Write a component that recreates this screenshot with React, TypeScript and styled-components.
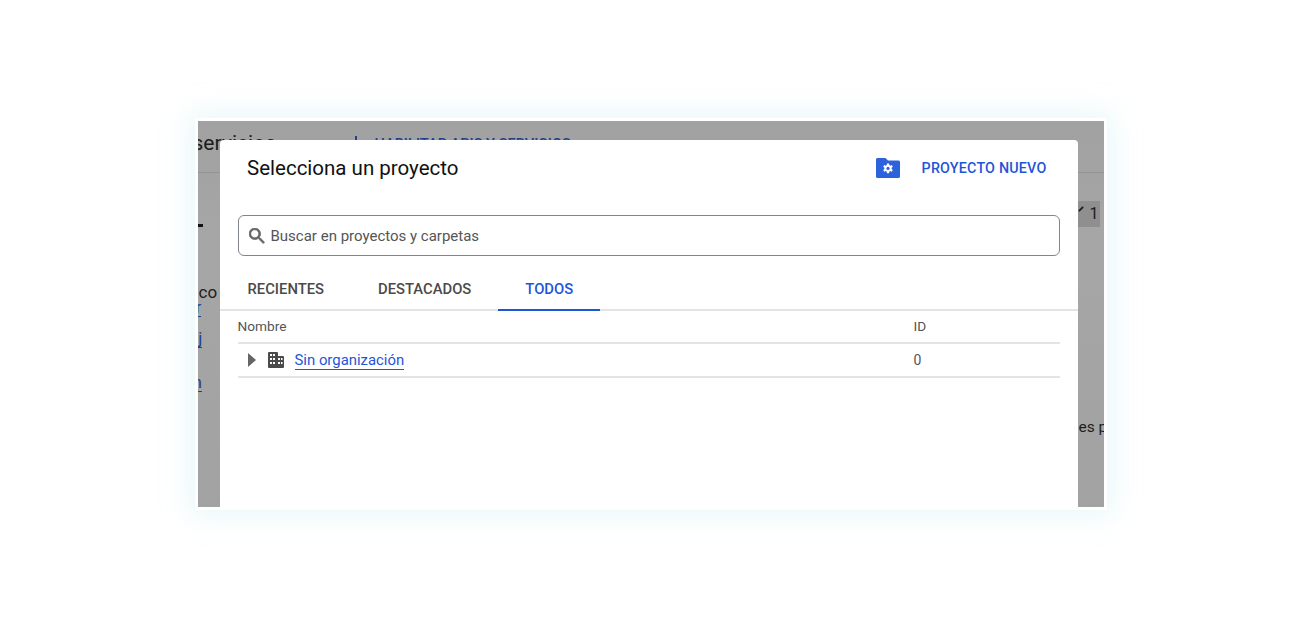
import React from 'react';
import styled, { createGlobalStyle } from 'styled-components';

const GlobalStyle = createGlobalStyle`
	html, body {
		margin: 0;
		padding: 0;
		background: #fff;
		font-family: Roboto, 'Liberation Sans', sans-serif;
	}
`;

const FolderGearIcon = () => (
	<svg width="24" height="20" viewBox="0 0 24 20">
		<path
			fill="#2c63dc"
			d="M1.500 0h8l2.500 2.600h10.500c.8 0 1.500.7 1.500 1.500v14.400c0 .8-.7 1.500-1.500 1.500h-21C.7 20 0 19.300 0 18.500v-17C0 .7.7 0 1.500 0z"
		/>
		<path
			fill="#fff"
			d="M13 5.600h-2l-.3 1.500-1 .6-1.500-.6-1 1.700 1.200 1v1.200l-1.200 1 1 1.700 1.500-.6 1 .6.3 1.500h2l.3-1.500 1-.6 1.500.6 1-1.700-1.200-1V9.800l1.200-1-1-1.700-1.500.6-1-.6z"
		/>
		<circle cx="12" cy="10.400" r="1.600" fill="#2c63dc" />
	</svg>
);

const SearchIcon = () => (
	<svg width="16" height="16" viewBox="3 3 18 18">
		<path
			fill="#666"
			stroke="#666"
			strokeWidth="0.8"
			d="M15.500 14h-.79l-.28-.27A6.470 6.470 0 0 0 16 9.500 6.500 6.500 0 1 0 9.500 16c1.610 0 3.090-.59 4.230-1.570l.27.28v.79l5 4.990L20.490 19l-4.990-5zm-6 0C7.010 14 5 11.990 5 9.500S7.010 5 9.500 5 14 7.010 14 9.500 11.990 14 9.500 14z"
		/>
	</svg>
);

const BuildingIcon = () => (
	<svg width="16" height="16" viewBox="0 0 16 16">
		<path
			fill="#4a4a4a"
			fillRule="evenodd"
			d="M1 0h8a1 1 0 0 1 1 1v3h5a1 1 0 0 1 1 1v10a1 1 0 0 1-1 1H1a1 1 0 0 1-1-1V1a1 1 0 0 1 1-1zM2 2v2h2V2zm3 0v2h2V2zM2 6v2h2V6zm3 0v2h2V6zm5 0v2h2V6zm3 0v2h1.500V6zM2 10v2h2v-2zm3 0v2h2v-2zm5 0v2h2v-2zm3 0v2h1.500v-2z"
		/>
	</svg>
);

const tabs = ['RECIENTES', 'DESTACADOS', 'TODOS'];

const App = () => {
	return (
		<>
			<GlobalStyle />
			<Page>
				<Frame>
					<BackText $left={-5} $top={12} $size={21}>
						servicios
					</BackText>
					<BackRule $top={51} />
					<BackLink $left={177} $top={14}>
						HABILITAR APIS Y SERVICIOS
					</BackLink>
					<PlusMark />
					<Dash />
					<Badge />
					<CheckMark />
					<BackText $left={892} $top={85} $size={16}>
						1
					</BackText>
					<BackText $left={1} $top={163} $size={17}>
						co
					</BackText>
					<BackBlue $left={-2} $top={178}>
						r
					</BackBlue>
					<BackBlue $left={-9} $top={209}>
						oj
					</BackBlue>
					<BackBlue $left={-5} $top={253}>
						n
					</BackBlue>
					<BackText $left={881} $top={299} $size={15.5}>
						es p
					</BackText>
					<Modal>
						<Header>
							<Title>Selecciona un proyecto</Title>
							<HeaderActions>
								<FolderGearIcon />
								<NewProject>PROYECTO NUEVO</NewProject>
							</HeaderActions>
						</Header>
						<SearchBox>
							<SearchIcon />
							<SearchText>Buscar en proyectos y carpetas</SearchText>
						</SearchBox>
						<TabBar>
							{tabs.map((tab) => (
								<Tab key={tab} $active={tab === 'TODOS'}>
									{tab}
								</Tab>
							))}
						</TabBar>
						<Table>
							<HeadRow>
								<span>Nombre</span>
								<span>ID</span>
							</HeadRow>
							<BodyRow>
								<NameCell>
									<Caret />
									<BuildingIcon />
									<OrgLink>Sin organización</OrgLink>
								</NameCell>
								<span>0</span>
							</BodyRow>
						</Table>
					</Modal>
				</Frame>
			</Page>
		</>
	);
};

export default App;

const Page = styled.div`
	width: 1300px;
	height: 619px;
	overflow: hidden;
	display: flex;
	justify-content: center;
	padding: 118px 0 0 1px;
	box-sizing: border-box;
`;

const Frame = styled.div`
	position: relative;
	width: 906px;
	height: 386px;
	overflow: hidden;
	background: linear-gradient(180deg, #a1a1a1 0%, #a6a6a6 30%, #a3a2a2 100%);
	border: 3px solid #fff;
	box-shadow: 0 0 26px 5px rgba(190, 232, 238, 0.36);
`;

const BackText = styled.span<{ $left: number; $top: number; $size: number }>`
	position: absolute;
	left: ${(p) => p.$left}px;
	top: ${(p) => p.$top}px;
	font-size: ${(p) => p.$size}px;
	line-height: 1;
	color: #1c1c1c;
	white-space: nowrap;
`;

const BackRule = styled.div<{ $top: number }>`
	position: absolute;
	left: 0;
	right: 0;
	top: ${(p) => p.$top}px;
	height: 1px;
	background: #939393;
`;

const BackLink = styled.span<{ $left: number; $top: number }>`
	position: absolute;
	left: ${(p) => p.$left}px;
	top: ${(p) => p.$top}px;
	font-size: 14.600px;
	font-weight: 500;
	color: #23408c;
	white-space: nowrap;
`;

const PlusMark = styled.div`
	position: absolute;
	left: 157px;
	top: 15px;
	width: 2px;
	height: 12px;
	background: #23408c;
`;

const Dash = styled.div`
	position: absolute;
	left: 0;
	top: 103px;
	width: 5px;
	height: 3px;
	background: #111;
`;

const Badge = styled.div`
	position: absolute;
	right: 4px;
	top: 80px;
	width: 40px;
	height: 26px;
	background: #8f8f8f;
`;

const CheckMark = styled.div`
	position: absolute;
	left: 880px;
	top: 87px;
	width: 6px;
	height: 2px;
	background: #222;
	transform: rotate(-45deg);
`;

const BackBlue = styled.span<{ $left: number; $top: number }>`
	position: absolute;
	left: ${(p) => p.$left}px;
	top: ${(p) => p.$top}px;
	font-size: 17px;
	line-height: 17px;
	color: #23408c;
	border-bottom: 1px solid #23408c;
`;

const Modal = styled.div`
	position: absolute;
	left: 22px;
	top: 19px;
	width: 858px;
	height: 420px;
	background: #fff;
	border-radius: 4px 4px 0 0;
	color: #444;
`;

const Header = styled.div`
	display: flex;
	align-items: center;
	justify-content: space-between;
	height: 56px;
	padding: 0 31px 0 27.500px;
`;

const Title = styled.h1`
	margin: 0;
	font-size: 20.500px;
	font-weight: 400;
	color: #111;
`;

const HeaderActions = styled.div`
	display: flex;
	align-items: center;
	gap: 22px;
`;

const NewProject = styled.span`
	font-size: 14.300px;
	font-weight: 500;
	letter-spacing: 0.2px;
	color: #1f55d8;
`;

const SearchBox = styled.div`
	display: flex;
	align-items: center;
	gap: 6px;
	box-sizing: border-box;
	width: 822px;
	height: 41px;
	margin: 19px 0 0 18px;
	padding: 0 10px;
	border: 1px solid #80868b;
	border-radius: 6px;
`;

const SearchText = styled.span`
	margin-top: 1px;
	font-size: 15px;
	color: #555;
`;

const TabBar = styled.div`
	display: flex;
	height: 55px;
	padding-left: 1px;
	border-bottom: 2px solid #e4e4e4;
	box-sizing: border-box;
`;

const Tab = styled.div<{ $active: boolean }>`
	display: flex;
	align-items: center;
	box-sizing: border-box;
	height: 55px;
	padding: 13px 27px 0;
	font-size: 14.800px;
	font-weight: 500;
	color: ${(p) => (p.$active ? '#1f55d8' : '#4a4a4a')};
	border-bottom: 2px solid ${(p) => (p.$active ? '#1f55d8' : 'transparent')};
`;

const Table = styled.div`
	width: 822px;
	margin-left: 18px;
	font-size: 14px;
	color: #555;
`;

const HeadRow = styled.div`
	display: grid;
	grid-template-columns: 676px 1fr;
	align-items: center;
	height: 33px;
	padding-bottom: 2px;
	font-size: 13.700px;
	border-bottom: 2px solid #e4e4e4;
	box-sizing: border-box;
`;

const BodyRow = styled(HeadRow)`
	height: 34px;
	padding-bottom: 0;
	font-size: 14px;
`;

const NameCell = styled.div`
	display: flex;
	align-items: center;
	padding-left: 10px;
`;

const Caret = styled.span`
	width: 0;
	height: 0;
	margin-right: 12px;
	border-left: 8px solid #666;
	border-top: 7px solid transparent;
	border-bottom: 7px solid transparent;
`;

const OrgLink = styled.span`
	margin: 1px 0 0 11px;
	font-size: 14.900px;
	color: #1f55d8;
	border-bottom: 1px solid #1f55d8;
`;
